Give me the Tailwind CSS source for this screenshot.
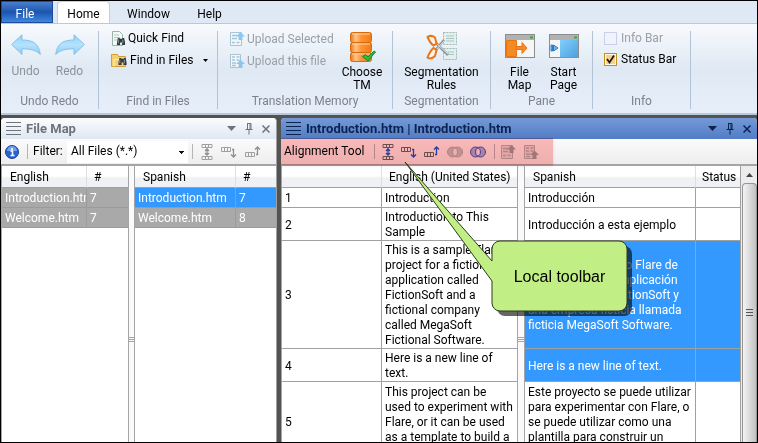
<!DOCTYPE html>
<html lang="en">
<head>
<meta charset="utf-8">
<title>Alignment Tool</title>
<script src="https://cdn.jsdelivr.net/npm/@tailwindcss/browser@4"></script>
</head>
<body class="font-[Roboto,'Noto_Sans',sans-serif] text-[12px] leading-[15px] text-black">
<svg class="absolute h-0 w-0" aria-hidden="true">
  <defs>
    <linearGradient id="sky" x1="0" y1="0" x2="0" y2="1"><stop offset="0" stop-color="#8fd0f8"/><stop offset=".5" stop-color="#b4e3fd"/><stop offset="1" stop-color="#8ccdf5"/></linearGradient>
    <linearGradient id="orange" x1="0" x2="1"><stop offset="0" stop-color="#ee7411"/><stop offset=".25" stop-color="#ffc48a"/><stop offset=".5" stop-color="#ff9434"/><stop offset="1" stop-color="#f07c14"/></linearGradient>
    <linearGradient id="pane" x1="0" y1="0" x2="1" y2="1"><stop offset="0" stop-color="#7fd0fb"/><stop offset="1" stop-color="#4f9fe0"/></linearGradient>
    <symbol id="undo" viewBox="0 0 30 22"><path d="M.7 10.500 11 .8V6c10 0 17 3 18.300 14.500C25 16 19 14.800 11 14.800V20.500Z" fill="url(#sky)" stroke="#84c1ea" stroke-linejoin="round"/></symbol>
    <symbol id="binoc" viewBox="0 0 10 10"><path d="M1.500 1h2v1h3V1h2l1 5v3H6V6H4v3H.5V6Z" fill="#333b42"/><path d="M2 3v4M7 3v4" stroke="#9aa5ad"/></symbol>
    <symbol id="split" viewBox="0 0 12 16"><path d="M1 .5h10v3H1ZM4.500.5v3M7.500.5v3M1 12.500h10v3H1ZM4.500 12.500v3M7.500 12.500v3" fill="none" stroke="var(--box)"/><path d="M6 4v8M4 7l2-2 2 2M4 9l2 2 2-2" fill="none" stroke="var(--arr)" stroke-width="1.300"/></symbol>
    <symbol id="down" viewBox="0 0 16 12"><path d="M.5 1.500h9v4h-9ZM3.500 1.500v4M6.500 1.500v4" fill="none" stroke="var(--box)"/><path d="M11 3.500h1.500V11M10 8.500l2.500 2.500 2.500-2.500" fill="none" stroke="var(--arr)" stroke-width="1.300"/></symbol>
    <symbol id="up" viewBox="0 0 16 12"><path d="M.5 6.500h9v4h-9ZM3.500 6.500v4M6.500 6.500v4" fill="none" stroke="var(--box)"/><path d="M11 8.500h1.500V1M10 3.500 12.500 1 15 3.500" fill="none" stroke="var(--arr)" stroke-width="1.300"/></symbol>
    <symbol id="rings" viewBox="0 0 16 12"><circle cx="5.500" cy="6" r="5" fill="var(--mid)" stroke="var(--arr)"/><circle cx="10.500" cy="6" r="5" fill="var(--mid)" stroke="var(--arr)"/><path d="M8 1.700A5 5 0 0 1 8 10.300 5 5 0 0 1 8 1.700" fill="var(--lens)" stroke="var(--arr)"/></symbol>
    <symbol id="upsel" viewBox="0 0 16 16"><path d="M1.500 1.500h11v13h-11Z" fill="var(--paper)" stroke="var(--box)"/><path d="M3 4.500h5M3 7.500h5M3 11.500h3M7.500 11.500h3" stroke="var(--box)" fill="none" stroke-width="1.500"/><path d="M11.500 1 16 5.500h-2.500V9h-4V5.500H7Z" fill="var(--arr)"/></symbol>
    <symbol id="upfile" viewBox="0 0 16 16"><path d="M1.500 1.500h10v13h-10Z" fill="var(--paper)" stroke="var(--box)"/><path d="M3 4h3M7.500 4h3M3 7h3M7.500 7h3M3 10h4M3 12.500h4" stroke="var(--box)" fill="none" stroke-width="1.500"/><path d="M11.500 6.500 16 11h-2.500v4h-4v-4H7Z" fill="var(--arr)"/></symbol>
    <symbol id="grip" viewBox="0 0 15 14"><path d="M0 .5h15M0 4.500h15M0 8.500h15M0 12.500h15" stroke="currentColor"/></symbol>
    <symbol id="tri" viewBox="0 0 9 5"><path d="M0 0h9L4.500 5Z" fill="currentColor"/></symbol>
    <symbol id="pin" viewBox="0 0 8 12"><path d="M2 .5h4V6.500M2.500.5v6M5 .5v6M.5 6.500h7M4 7v4.500" fill="none" stroke="currentColor"/></symbol>
    <symbol id="close" viewBox="0 0 8 8"><path d="m.5.5 7 7m0-7-7 7" stroke="currentColor" stroke-width="1.500"/></symbol>
  </defs>
</svg>

<div class="relative flex h-screen flex-col overflow-hidden border border-black bg-[#535353]">
  <nav class="flex h-[22px] shrink-0 items-stretch bg-[#dfe9f5] whitespace-nowrap">
    <button class="w-[52px] border border-[#1c4c9c] bg-gradient-to-b from-[#4a7fcf] via-[#1d55ae] to-[#3f86e0] pt-1 pr-1 text-white">File</button>
    <button class="ml-1 w-[53px] rounded-t-sm border border-b-0 border-[#c3cfdd] bg-white pt-1">Home</button>
    <button class="w-[77px] pt-1">Window</button>
    <button class="w-[45px] pt-1">Help</button>
  </nav>

  <section class="flex h-[92px] shrink-0 border-t border-b-2 border-[#b9c9da] bg-gradient-to-b from-[#f8fafd] via-[#dfe9f4] to-[#e6eefa] pt-[7px] pb-1 text-center whitespace-nowrap">
    <div class="flex w-[98px] shrink-0 flex-col justify-between border-r border-[#b3c3d6] text-[#8d9299]">
      <div class="flex justify-center gap-3 pr-1">
        <button class="flex w-8 flex-col items-center pt-[3px]" disabled><svg class="h-[22px] w-[30px]"><use href="#undo"/></svg><span class="mt-2">Undo</span></button>
        <button class="flex w-8 flex-col items-center pt-[3px]" disabled><svg class="h-[22px] w-[30px] -scale-x-100"><use href="#undo"/></svg><span class="mt-2">Redo</span></button>
      </div>
      <div class="text-[#7c8289]">Undo Redo</div>
    </div>
    <div class="flex w-[119px] shrink-0 flex-col justify-between border-r border-[#b3c3d6]">
      <div class="flex flex-col items-start gap-[7px] pl-3">
        <button class="flex items-center gap-[2px]"><svg class="size-[15px]" viewBox="0 0 15 15"><path d="M1.500.5h7l3 3v11h-10Z" fill="#f4f9f7" stroke="#9ab3a9"/><path d="M3 4h5M3 6.500h6M3 9h3" stroke="#a9c9bb"/><use href="#binoc" x="5" y="6" width="10" height="9"/></svg>Quick Find</button>
        <button class="flex items-center gap-[2px]"><svg class="h-[15px] w-[17px]" viewBox="0 0 17 15"><path d="M.5 1.500h6l1 2h7v10H.5Z" fill="#f6cf72" stroke="#d49c38"/><path d="M3 13.500V6.500h12" fill="none" stroke="#fff0b8"/><use href="#binoc" x="7" y="4" width="9" height="9"/></svg>Find in Files<svg class="ml-2 h-[3px] w-[5px]"><use href="#tri" width="5" height="3"/></svg></button>
      </div>
      <div class="text-[#7c8289]">Find in Files</div>
    </div>
    <div class="flex w-[175px] shrink-0 flex-col justify-between border-r border-[#b3c3d6]">
      <div class="flex h-[66px] justify-between pr-2 pl-[11px]">
        <div class="flex flex-col items-start gap-[6px] text-[#9aa0a8] [--arr:#8cc8ee] [--box:#a9c3d6] [--paper:#f2f7fa]">
          <button class="flex items-center gap-[2px]" disabled><svg class="size-4"><use href="#upsel"/></svg>Upload Selected</button>
          <button class="flex items-center gap-[2px]" disabled><svg class="size-4"><use href="#upfile"/></svg>Upload this file</button>
        </div>
        <button class="flex w-11 flex-col items-center leading-[13px]"><svg class="mb-[3px] h-8 w-[28px]" viewBox="0 0 28 32"><rect x="2.500" y="1.500" width="21" height="10" rx="2" fill="url(#orange)" stroke="#d96a0c"/><rect x="2.500" y="11.500" width="21" height="10" rx="2" fill="url(#orange)" stroke="#d96a0c"/><rect x="2.500" y="21.500" width="21" height="9" rx="2" fill="url(#orange)" stroke="#d96a0c"/><path d="M4 3h18M4 13h18M4 23h18" stroke="#ffd2a4"/><path d="m14.500 25.500 3-2 2.500 2.500 6-6 1.500 1L20 30Z" fill="#2dbd45" stroke="#128a2a"/></svg>Choose<br>TM</button>
      </div>
      <div class="text-[#7c8289]">Translation Memory</div>
    </div>
    <div class="flex w-[98px] shrink-0 flex-col justify-between border-r border-[#b3c3d6]">
      <button class="flex flex-col items-center leading-[13px]"><svg class="mb-[3px] h-8 w-8" viewBox="0 0 32 32"><path d="M17.500 1.500h13v12h-13ZM17.500 17.500h13v11h-13Z" fill="#e4f0ee" stroke="#9db9b6" stroke-dasharray="2 1"/><path d="M20 5h8M20 7.500h8M20 10h8M22 21h6M22 23.500h6" stroke="#a9c6c2"/><path d="m9 11 13 13M9 20 18 9" stroke="#8d9499" stroke-width="2.500"/><path d="m10 12 12 11M10 19l8-9" stroke="#dfe3e5"/><path d="M1.500 6Q5 3.500 9 6.500l1.500 6-3 2Q4 12 1.500 6ZM1.500 26.500Q5 29 9 25l1.500-6-3-2Q4 20 1.500 26.500Z" fill="#fff4e8" stroke="#e8761a" stroke-width="2"/></svg>Segmentation<br>Rules</button>
      <div class="text-[#7c8289]">Segmentation</div>
    </div>
    <div class="flex w-[102px] shrink-0 flex-col justify-between border-r border-[#b3c3d6]">
      <div class="flex justify-center gap-[10px]">
        <button class="flex w-[34px] flex-col items-center leading-[13px]"><svg class="mb-[3px] h-8 w-[30px]" viewBox="0 0 30 32"><rect x=".5" y="3.500" width="29" height="23" fill="#f6f6f6" stroke="#8d8d8d"/><path d="M1 4h28v5H1Z" fill="#b1b1b1"/><path d="M25 5.500h3v2h-3Z" fill="#35ab35"/><path d="M1.500 9.500h10v16h-10Z" fill="#f58a24" stroke="#e87410"/><path d="M11 15.500h6v-4l5 5.500-5 5.500v-4h-6Z" fill="#f58a24" stroke="#e87410"/></svg>File<br>Map</button>
        <button class="flex w-[34px] flex-col items-center leading-[13px]"><svg class="mb-[3px] h-8 w-[30px]" viewBox="0 0 30 32"><rect x=".5" y="3.500" width="29" height="23" fill="#f6f6f6" stroke="#8d8d8d"/><path d="M1 4h28v5H1Z" fill="#b1b1b1"/><path d="M25 5.500h3v2h-3Z" fill="#35ab35"/><path d="M11 9h18v17H11Z" fill="url(#pane)"/><path d="M2 14h1.500v6H2ZM4.500 14 9 17l-4.500 3Z" fill="#79b7e8" stroke="#2b7cc4"/></svg>Start<br>Page</button>
      </div>
      <div class="text-[#7c8289]">Pane</div>
    </div>
    <div class="flex w-[98px] shrink-0 flex-col justify-between border-r border-[#b3c3d6]">
      <div class="flex flex-col items-start gap-[6px] pl-[11px]">
        <label class="flex items-center gap-1 text-[#9aa0a8]"><input type="checkbox" disabled class="size-[13px] appearance-none border border-[#c9d0ea] bg-[#f1f3fc]">Info Bar</label>
        <label class="grid grid-cols-[13px_auto] items-center gap-x-1"><input type="checkbox" checked class="col-start-1 row-start-1 size-[13px] appearance-none border border-[#bd921f] bg-[#fbd08c] shadow-[inset_0_0_0_1px_#fff8e4]"><svg class="pointer-events-none col-start-1 row-start-1 size-[13px]" viewBox="0 0 13 13"><path d="m3 6 2.500 3.500L10 2.500" fill="none" stroke="#1b1b1b" stroke-width="1.800"/></svg><span>Status Bar</span></label>
      </div>
      <div class="text-[#7c8289]">Info</div>
    </div>
  </section>

  <main class="flex min-h-0 flex-1 gap-1 pt-[3px]">
    <section class="flex w-[276px] shrink-0 flex-col overflow-hidden rounded-t-[4px] border-r border-[#a0a0a0] bg-white">
      <header class="flex h-[21px] shrink-0 items-center bg-gradient-to-b from-[#fbfcfe] to-[#dfe7f2] pr-[6px] pl-[5px] text-[13px] font-bold text-[#707379]">
        <svg class="mr-[5px] h-[14px] w-[15px]"><use href="#grip"/></svg>
        <h2 class="flex-1">File Map</h2>
        <div class="flex items-center gap-[9px]">
          <button aria-label="Menu"><svg class="h-[5px] w-[9px]"><use href="#tri"/></svg></button>
          <button aria-label="Pin"><svg class="h-3 w-2"><use href="#pin"/></svg></button>
          <button aria-label="Close"><svg class="size-2"><use href="#close"/></svg></button>
        </div>
      </header>
      <div class="flex h-[25px] shrink-0 items-center bg-gradient-to-b from-[#fafafa] to-[#eeeeee] pl-1 whitespace-nowrap">
        <button aria-label="Info"><svg class="size-[14px]" viewBox="0 0 14 14"><circle cx="7" cy="7" r="6.500" fill="#2864cf" stroke="#173e9c"/><path d="M2 6a5 5 0 0 1 10 0Z" fill="#6fa0ee"/><path d="M7 3v2M5.500 6H7.500v4M5.500 10.500h4" stroke="#fff" stroke-width="1.500" fill="none"/></svg></button>
        <span class="mr-[5px] ml-2 h-[15px] w-px bg-[#b5b5b5]"></span>
        <label for="filter" class="w-[34px]">Filter:</label>
        <select id="filter" class="h-[22px] w-[121px] appearance-none bg-white bg-[linear-gradient(#111,#111),linear-gradient(#111,#111),linear-gradient(#111,#111)] bg-[length:5px_1px,3px_1px,1px_1px] bg-[position:112px_10px,113px_11px,114px_12px] bg-no-repeat pl-1"><option>All Files (*.*)</option></select>
        <span class="mx-[4px] h-[15px] w-px bg-[#b5b5b5]"></span>
        <div class="ml-1 flex items-center gap-2 [--arr:#8f8f8f] [--box:#a0a0a0]">
          <button disabled aria-label="Split"><svg class="h-4 w-3"><use href="#split"/></svg></button>
          <button disabled aria-label="Move down"><svg class="h-3 w-4"><use href="#down"/></svg></button>
          <button disabled aria-label="Move up"><svg class="h-3 w-4"><use href="#up"/></svg></button>
        </div>
      </div>
      <div class="flex min-h-0 flex-1 border-t-2 border-l border-[#a5a5a8] whitespace-nowrap">
        <div class="w-[127px] shrink-0 border-r border-[#a5a5a8]">
          <table class="w-full table-fixed border-separate border-spacing-0 text-left">
            <colgroup><col class="w-[85px]"><col></colgroup>
            <thead><tr class="h-[22px] bg-gradient-to-b from-white from-45% to-[#f0f1f4] to-55%"><th class="border-r border-b border-r-[#dcdfe4] border-b-[#a0a0a0] pt-0.5 pl-2 font-normal">English</th><th class="border-b border-[#a0a0a0] pt-0.5 pl-[7px] font-normal">#</th></tr></thead>
            <tbody class="bg-[#a9a9a9] text-white">
              <tr class="h-5"><td class="overflow-hidden border-r border-b border-[#9b9b9b] pt-0.5 pl-[3px]">Introduction.htm</td><td class="border-b border-[#9b9b9b] pt-0.5 pl-[3px]">7</td></tr>
              <tr class="h-5"><td class="overflow-hidden border-r border-b border-[#9b9b9b] pt-0.5 pl-[3px]">Welcome.htm</td><td class="border-b border-[#9b9b9b] pt-0.5 pl-[3px]">7</td></tr>
            </tbody>
          </table>
        </div>
        <div class="flex w-[5px] shrink-0 items-center bg-[#fafafa] pt-[70px]"><span class="h-[5px] w-full border-y border-[#a5a5a8] bg-[linear-gradient(#a5a5a8,#a5a5a8)] bg-[length:100%_1px] bg-center bg-no-repeat"></span></div>
        <div class="min-w-0 flex-1 border-l border-[#a5a5a8]">
          <table class="w-full table-fixed border-separate border-spacing-0 text-left">
            <colgroup><col class="w-[101px]"><col></colgroup>
            <thead><tr class="h-[22px] bg-gradient-to-b from-white from-45% to-[#f0f1f4] to-55%"><th class="border-r border-b border-r-[#dcdfe4] border-b-[#a0a0a0] pt-0.5 pl-2 font-normal">Spanish</th><th class="border-b border-[#a0a0a0] pt-0.5 pl-[7px] font-normal">#</th></tr></thead>
            <tbody class="bg-[#a9a9a9] text-white">
              <tr class="h-5 bg-[#3399ff]"><td class="overflow-hidden border-r border-b border-[#9b9b9b] pt-0.5 pl-[3px]">Introduction.htm</td><td class="border-b border-[#9b9b9b] pt-0.5 pl-[3px]">7</td></tr>
              <tr class="h-5"><td class="overflow-hidden border-r border-b border-[#9b9b9b] pt-0.5 pl-[3px]">Welcome.htm</td><td class="border-b border-[#9b9b9b] pt-0.5 pl-[3px]">8</td></tr>
            </tbody>
          </table>
        </div>
      </div>
    </section>

    <section class="flex min-w-0 flex-1 flex-col overflow-hidden rounded-t-[4px] bg-white">
      <header class="flex h-[21px] shrink-0 items-center bg-gradient-to-b from-[#7499d6] to-[#517dc6] pr-[6px] pl-[5px] text-[13px] font-bold text-[#0c2350]">
        <svg class="mr-[5px] h-[14px] w-[15px]"><use href="#grip"/></svg>
        <h2 class="flex-1 whitespace-nowrap">Introduction.htm | Introduction.htm</h2>
        <div class="flex items-center gap-[9px]">
          <button aria-label="Menu"><svg class="h-[5px] w-[9px]"><use href="#tri"/></svg></button>
          <button aria-label="Pin"><svg class="h-3 w-2"><use href="#pin"/></svg></button>
          <button aria-label="Close"><svg class="size-2"><use href="#close"/></svg></button>
        </div>
      </header>
      <div class="relative flex h-[25px] shrink-0 items-center bg-gradient-to-b from-[#fafafa] to-[#eeeeee] pl-[3px] whitespace-nowrap">
        <span class="w-[85px]">Alignment Tool</span>
        <span class="mx-[5px] h-[15px] w-px bg-[#b5b5b5]"></span>
        <div class="ml-[2px] flex items-center gap-[7px] [--arr:#2c50d8] [--box:#6a6a6a] [--lens:#ececff] [--mid:#a9b1e8]">
          <button aria-label="Split"><svg class="h-4 w-3"><use href="#split"/></svg></button>
          <button aria-label="Move down"><svg class="h-3 w-4"><use href="#down"/></svg></button>
          <button aria-label="Move up"><svg class="h-3 w-4"><use href="#up"/></svg></button>
          <button disabled aria-label="Merge" class="[--arr:#b0b0b0] [--lens:#eeeeee] [--mid:#c4c4c4]"><svg class="h-3 w-4"><use href="#rings"/></svg></button>
          <button aria-label="Unmerge" class="[--arr:#5050b4]"><svg class="h-3 w-4"><use href="#rings"/></svg></button>
        </div>
        <span class="mr-[5px] ml-2 h-[15px] w-px bg-[#b5b5b5]"></span>
        <div class="flex items-center gap-[7px] [--arr:#a0a0a0] [--box:#b4b4b4] [--paper:#e2e2e2]">
          <button disabled aria-label="Upload selected"><svg class="size-4"><use href="#upsel"/></svg></button>
          <button disabled aria-label="Upload this file"><svg class="size-4"><use href="#upfile"/></svg></button>
        </div>
        <div class="pointer-events-none absolute -top-px -left-px h-[27px] w-[273px] bg-[#ffbcbc] mix-blend-multiply shadow-sm"></div>
      </div>
      <div class="flex min-h-0 flex-1 border-t-2 border-l border-[#a5a5a8]">
        <div class="w-[236px] shrink-0 border-r border-[#a5a5a8]">
          <table class="w-full table-fixed border-separate border-spacing-0 text-left whitespace-nowrap">
            <colgroup><col class="w-[100px]"><col></colgroup>
            <thead><tr class="h-[22px] bg-gradient-to-b from-white from-45% to-[#f0f1f4] to-55%"><th class="border-r border-b border-r-[#dcdfe4] border-b-[#a0a0a0]"></th><th class="border-b border-[#a0a0a0] pt-0.5 pl-[7px] font-normal">English (United States)</th></tr></thead>
            <tbody>
              <tr class="h-5"><td class="border-r border-b border-[#a0a0a0] pt-0.5 pl-[3px]">1</td><td class="border-b border-[#a0a0a0] pt-0.5 pl-[3px]">Introduction</td></tr>
              <tr class="h-[33px]"><td class="border-r border-b border-[#a0a0a0] pt-0.5 pl-[3px]">2</td><td class="border-b border-[#a0a0a0] pt-0.5 pl-[3px]">Introduction to This<br>Sample</td></tr>
              <tr class="h-[108px]"><td class="border-r border-b border-[#a0a0a0] pt-0.5 pl-[3px]">3</td><td class="border-b border-[#a0a0a0] pt-0.5 pl-[3px]">This is a sample Flare<br>project for a fictional<br>application called<br>FictionSoft and a<br>fictional company<br>called MegaSoft<br>Fictional Software.</td></tr>
              <tr class="h-[33px]"><td class="border-r border-b border-[#a0a0a0] pt-0.5 pl-[3px]">4</td><td class="border-b border-[#a0a0a0] pt-0.5 pl-[3px]">Here is a new line of<br>text.</td></tr>
              <tr class="h-[79px]"><td class="border-r border-b border-[#a0a0a0] pt-0.5 pl-[3px]">5</td><td class="border-b border-[#a0a0a0] pt-0.5 pl-[3px]">This project can be<br>used to experiment with<br>Flare, or it can be used<br>as a template to build a<br>similar project.</td></tr>
            </tbody>
          </table>
        </div>
        <div class="flex w-[6px] shrink-0 items-center bg-[#fafafa] pt-[70px]"><span class="h-[5px] w-full border-y border-[#a5a5a8] bg-[linear-gradient(#a5a5a8,#a5a5a8)] bg-[length:100%_1px] bg-center bg-no-repeat"></span></div>
        <div class="min-w-0 flex-1 border-l border-[#a5a5a8]">
          <table class="w-full table-fixed border-separate border-spacing-0 text-left whitespace-nowrap">
            <colgroup><col><col class="w-[45px]"></colgroup>
            <thead><tr class="h-[22px] bg-gradient-to-b from-white from-45% to-[#f0f1f4] to-55%"><th class="border-r border-b border-r-[#dcdfe4] border-b-[#a0a0a0] pt-0.5 pl-2 font-normal">Spanish</th><th class="border-r border-b border-[#a0a0a0] pt-0.5 pl-[6px] font-normal">Status</th></tr></thead>
            <tbody>
              <tr class="h-5"><td class="border-r border-b border-[#a0a0a0] pt-0.5 pl-[3px]">Introducción</td><td class="border-r border-b border-[#a0a0a0]"></td></tr>
              <tr class="h-[33px]"><td class="border-r border-b border-[#a0a0a0] pt-0.5 pl-[3px]">Introducción a esta ejemplo</td><td class="border-r border-b border-[#a0a0a0]"></td></tr>
              <tr class="h-[108px] bg-[#3399ff] text-white"><td class="border-r border-b border-[#a0a0a0] pt-0.5 pl-[3px]">Este es un proyecto Flare de<br>ejemplo para una aplicación<br>ficticia llamada FictionSoft y<br>una empresa ficticia llamada<br>ficticia MegaSoft Software.</td><td class="border-r border-b border-[#a0a0a0]"></td></tr>
              <tr class="h-[33px] bg-[#3399ff] text-white"><td class="border-r border-b border-[#a0a0a0] pt-0.5 pl-[3px]">Here is a new line of text.</td><td class="border-r border-b border-[#a0a0a0]"></td></tr>
              <tr class="h-[79px]"><td class="border-r border-b border-[#a0a0a0] pt-0.5 pl-[3px]">Este proyecto se puede utilizar<br>para experimentar con Flare, o<br>se puede utilizar como una<br>plantilla para construir un<br>proyecto similar.</td><td class="border-r border-b border-[#a0a0a0]"></td></tr>
            </tbody>
          </table>
        </div>
        <div class="flex w-4 shrink-0 flex-col bg-[#ececec] pl-px">
          <button aria-label="Scroll up" class="flex h-[17px] shrink-0 items-center justify-center"><svg class="h-1 w-[7px] rotate-180 text-[#444]"><use href="#tri" width="7" height="4"/></svg></button>
          <div class="flex flex-1 items-center justify-center rounded-t-sm border border-b-0 border-[#959595] bg-gradient-to-r from-[#f4f4f4] to-[#c2c2c6]"><svg class="h-2 w-[7px]" viewBox="0 0 7 8"><path d="M0 .5h7M0 3.500h7M0 6.500h7" stroke="#555"/></svg></div>
        </div>
      </div>
    </section>
  </main>

  <div class="pointer-events-none absolute top-[160px] left-[403px] h-[160px] w-[232px]">
    <svg class="absolute inset-0 h-full w-full" viewBox="404 161 232 160">
      <path d="M505 246H624a8 8 0 0 1 8 8V308a8 8 0 0 1-8 8H505a8 8 0 0 1-8-8V254a8 8 0 0 1 8-8Z" fill="#000" fill-opacity=".6"/>
      <path d="M500 241H619a8 8 0 0 1 8 8V303a8 8 0 0 1-8 8H500a8 8 0 0 1-8-8V281L405 162 492 261V249a8 8 0 0 1 8-8Z" fill="#c1ef85" stroke="#2c3a1c" stroke-linejoin="round"/>
    </svg>
    <div class="absolute top-[80px] left-[88px] flex h-[70px] w-[135px] items-center justify-center font-['Liberation_Sans',Arial,sans-serif] text-[16px]">Local toolbar</div>
  </div>
</div>
</body>
</html>
